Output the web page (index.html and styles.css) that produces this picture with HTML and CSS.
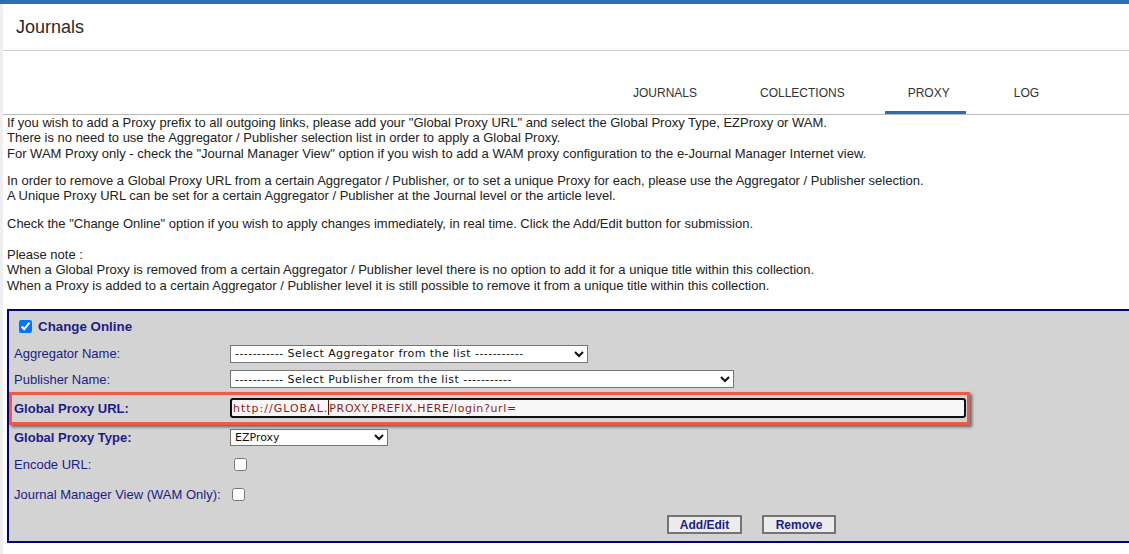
FILE: index.html
```html
<!DOCTYPE html>
<html lang="en">
<head>
<meta charset="utf-8">
<title>Journals - Proxy</title>
<link rel="stylesheet" href="styles.css">
</head>
<body>
<div class="topbar"></div>
<div class="page">
  <header class="title-bar"><h1 class="title">Journals</h1></header>
  <nav class="tabs">
    <a class="tab">JOURNALS</a>
    <a class="tab tab-collections">COLLECTIONS</a>
    <a class="tab tab-active">PROXY</a>
    <a class="tab tab-log">LOG</a>
  </nav>
  <div class="intro">
    <p class="para">If you wish to add a Proxy prefix to all outgoing links, please add your "Global Proxy URL" and select the Global Proxy Type, EZProxy or WAM.<br>There is no need to use the Aggregator / Publisher selection list in order to apply a Global Proxy.<br>For WAM Proxy only - check the "Journal Manager View" option if you wish to add a WAM proxy configuration to the e-Journal Manager Internet view.</p>
    <p class="para para-2">In order to remove a Global Proxy URL from a certain Aggregator / Publisher, or to set a unique Proxy for each, please use the Aggregator / Publisher selection.<br>A Unique Proxy URL can be set for a certain Aggregator / Publisher at the Journal level or the article level.</p>
    <p class="para para-3">Check the "Change Online" option if you wish to apply changes immediately, in real time. Click the Add/Edit button for submission.</p>
    <p class="para para-4">Please note :<br>When a Global Proxy is removed from a certain Aggregator / Publisher level there is no option to add it for a unique title within this collection.<br>When a Proxy is added to a certain Aggregator / Publisher level it is still possible to remove it from a unique title within this collection.</p>
  </div>
  <form class="proxy-form">
    <div class="row row-online">
      <input type="checkbox" class="online-check" checked>
      <span class="label label-bold">Change Online</span>
    </div>
    <div class="row row-agg">
      <span class="label">Aggregator Name:</span>
      <select class="sel sel-agg"><option>----------- Select Aggregator from the list -----------</option></select>
    </div>
    <div class="row row-pub">
      <span class="label">Publisher Name:</span>
      <select class="sel sel-pub"><option>----------- Select Publisher from the list -----------</option></select>
    </div>
    <div class="row row-url">
      <span class="label label-bold">Global Proxy URL:</span>
      <div class="fake-input"><span class="url-a">http://GLOBAL.</span><span class="caret"></span><span class="url-b">PROXY.PREFIX.HERE/login?url=</span></div>
    </div>
    <div class="row row-type">
      <span class="label label-bold">Global Proxy Type:</span>
      <select class="sel sel-type"><option>EZProxy</option><option>WAM</option></select>
    </div>
    <div class="row row-encode">
      <span class="label">Encode URL:</span>
      <input type="checkbox" class="box">
    </div>
    <div class="row row-wam">
      <span class="label">Journal Manager View (WAM Only):</span>
      <input type="checkbox" class="box box-wam">
    </div>
    <div class="row row-buttons">
      <button type="button" class="btn btn-add">Add/Edit</button>
      <button type="button" class="btn btn-remove">Remove</button>
    </div>
  </form>
</div>
</body>
</html>
```
FILE: styles.css
```css
html, body {
  margin: 0;
  padding: 0;
  background: #ffffff;
  overflow: hidden;
}
body {
  font-family: "Liberation Sans", Arial, sans-serif;
  font-size: 13px;
  color: #222;
  width: 1129px;
}
.topbar {
  height: 4px;
  background: #2d6db4;
}
.page {
  border-left: 3px solid #efefef;
  min-height: 550px;
}
.title-bar {
  box-sizing: border-box;
  height: 47px;
  border-bottom: 1px solid #cfcfcf;
  display: flex;
  align-items: center;
  padding-left: 13px;
  padding-top: 1px;
}
.title {
  margin: 0;
  font-size: 18px;
  font-weight: normal;
  color: #2a2a2a;
}
.tabs {
  box-sizing: border-box;
  height: 64px;
  border-bottom: 1px solid #b8b8b8;
  display: flex;
  align-items: flex-end;
  padding-left: 607px;
}
.tab {
  font-size: 12px;
  line-height: 14px;
  color: #333;
  padding: 0 23px 11px;
  border-bottom: 3px solid transparent;
}
.tab-collections { margin-left: 17px; }
.tab-active {
  margin-left: 17px;
  border-bottom-color: #2d6db4;
  padding-left: 23px;
  padding-right: 16px;
}
.tab-log { margin-left: 25px; }
.intro {
  padding-left: 4px;
}
.para {
  margin: 0;
  line-height: 15.33px;
  white-space: nowrap;
}
.para-2 { margin-top: 12px; }
.para-3 { margin-top: 12.3px; }
.para-4 { margin-top: 15.7px; }
.proxy-form {
  margin: 15.7px 0 0 4px;
  width: 1140px;
  border: 2px solid #000080;
  background: #d3d3d3;
  color: #1c1c88;
}
.row {
  display: flex;
  align-items: center;
  padding-left: 5px;
}
.label {
  width: 216px;
  flex: none;
  white-space: nowrap;
}
.label-bold { font-weight: bold; }
.row-online {
  box-sizing: border-box;
  height: 30px;
  padding-top: 2px;
  padding-left: 10px;
}
.row-online .label { margin-left: 6px; width: auto; font-size: 13.33px; }
.online-check {
  margin: 0;
  width: 13px;
  height: 13px;
}
.row-agg { height: 26px; }
.row-pub { height: 25px; }
.sel {
  font-family: "DejaVu Sans", Verdana, sans-serif;
  font-size: 11px;
  letter-spacing: 0.45px;
  height: 18px;
  margin: 0;
  color: #111;
  background: #fff;
}
.sel-agg { width: 358px; }
.sel-pub { width: 504px; }
.sel-type { width: 158px; height: 17px; letter-spacing: 0; }
.row-url {
  width: 961px;
  box-sizing: border-box;
  height: 33px;
  border: 3px solid #f3594b;
  padding-left: 2px;
  box-shadow: 2px 2px 3px rgba(0, 0, 0, 0.55);
  position: relative;
}
.fake-input {
  width: 736px;
  height: 20px;
  box-sizing: border-box;
  border: 2px solid #111;
  border-radius: 3px;
  background: #f7f7f7;
  color: #8e1b1b;
  font-family: "DejaVu Sans", Verdana, sans-serif;
  font-size: 11px;
  line-height: 16px;
  padding-left: 1px;
  margin-top: -1px;
  white-space: nowrap;
}
.url-a { letter-spacing: 1px; }
.url-b { letter-spacing: 0.64px; }
.caret {
  display: inline-block;
  width: 1px;
  height: 15px;
  background: #6b0d0d;
  vertical-align: -3px;
}
.row-type { height: 26px; }
.row-encode { height: 28px; }
.row-wam { height: 32px; }
.box {
  margin: 0 0 0 4px;
  width: 13px;
  height: 13px;
}
.box-wam { margin-left: 2px; }
.row-buttons {
  height: 28px;
  padding-bottom: 2px;
  padding-left: 658px;
  gap: 20px;
}
.btn {
  font-family: "Liberation Sans", Arial, sans-serif;
  font-size: 12px;
  font-weight: bold;
  color: #1c1c88;
  background: #ececec;
  border: 2px solid #747474;
  width: 75px;
  height: 19px;
  padding: 0;
  margin: 0;
}
.btn-remove { width: 74px; }
```
